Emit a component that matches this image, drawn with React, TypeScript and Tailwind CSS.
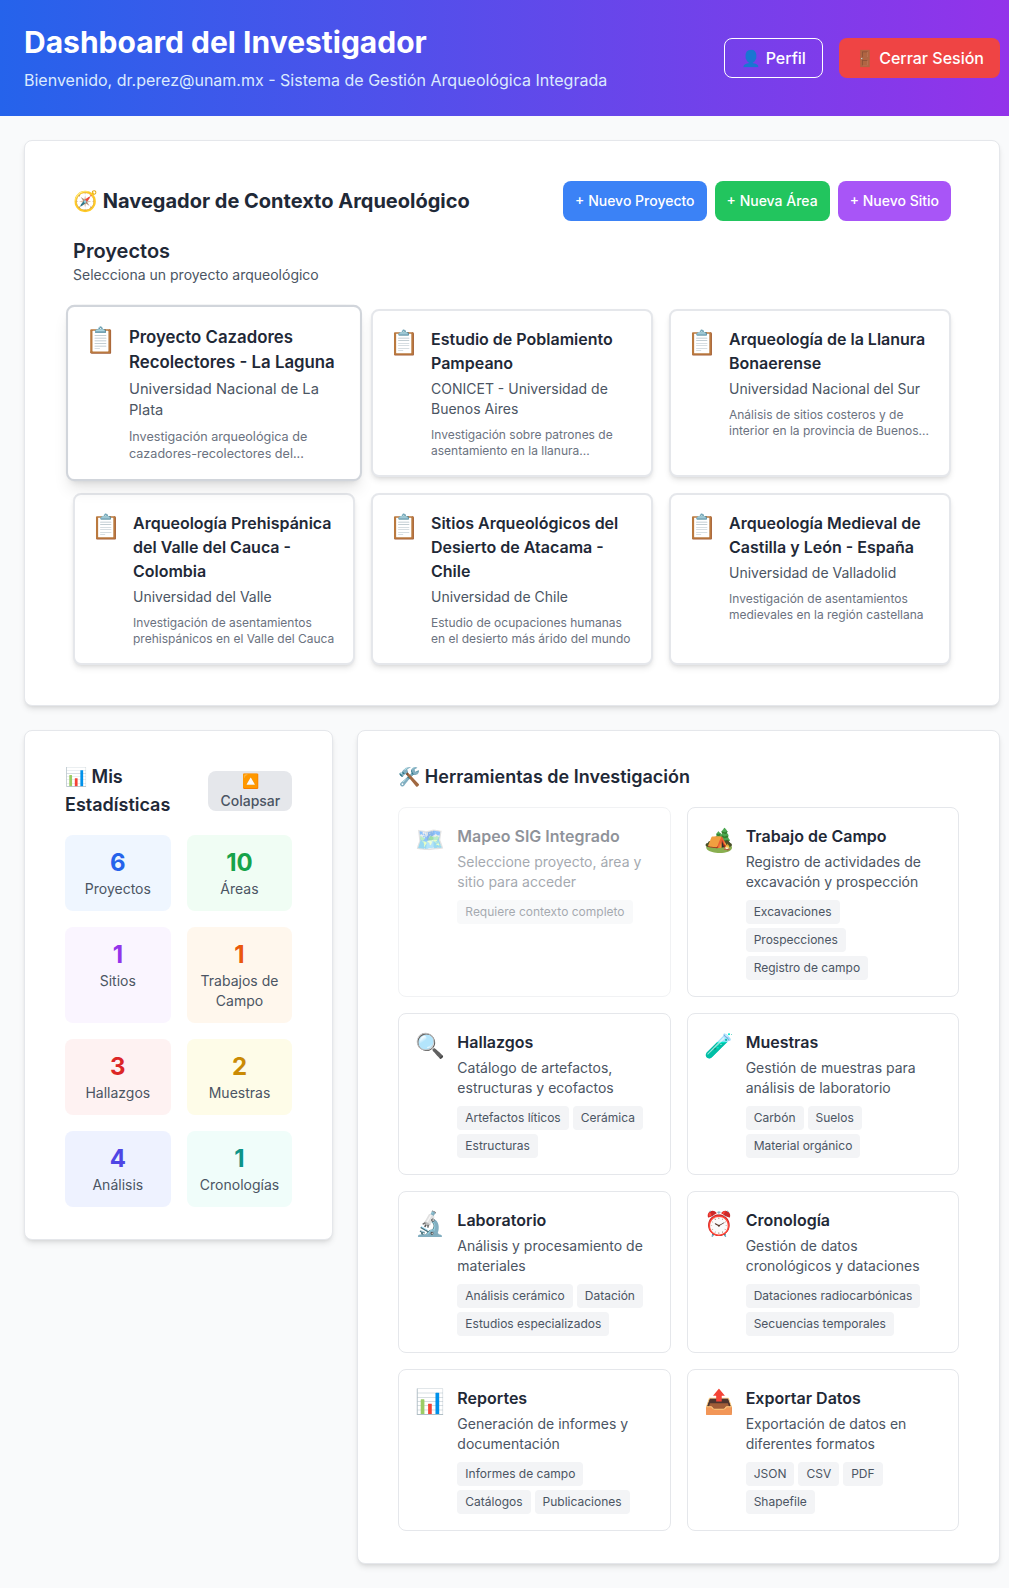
const projects = [
  {
    title: "Proyecto Cazadores Recolectores - La Laguna",
    org: "Universidad Nacional de La Plata",
    desc: "Investigación arqueológica de cazadores-recolectores del...",
    selected: true,
  },
  {
    title: "Estudio de Poblamiento Pampeano",
    org: "CONICET - Universidad de Buenos Aires",
    desc: "Investigación sobre patrones de asentamiento en la llanura...",
  },
  {
    title: "Arqueología de la Llanura Bonaerense",
    org: "Universidad Nacional del Sur",
    desc: "Análisis de sitios costeros y de interior en la provincia de Buenos...",
  },
  {
    title: "Arqueología Prehispánica del Valle del Cauca - Colombia",
    org: "Universidad del Valle",
    desc: "Investigación de asentamientos prehispánicos en el Valle del Cauca",
  },
  {
    title: "Sitios Arqueológicos del Desierto de Atacama - Chile",
    org: "Universidad de Chile",
    desc: "Estudio de ocupaciones humanas en el desierto más árido del mundo",
  },
  {
    title: "Arqueología Medieval de Castilla y León - España",
    org: "Universidad de Valladolid",
    desc: "Investigación de asentamientos medievales en la región castellana",
  },
];

const stats = [
  { value: "6", label: "Proyectos", box: "bg-[#eff6ff]", text: "text-[#2563eb]" },
  { value: "10", label: "Áreas", box: "bg-[#f0fdf4]", text: "text-[#16a34a]" },
  { value: "1", label: "Sitios", box: "bg-[#faf5ff]", text: "text-[#9333ea]" },
  { value: "1", label: "Trabajos de Campo", box: "bg-[#fff7ed]", text: "text-[#ea580c]" },
  { value: "3", label: "Hallazgos", box: "bg-[#fef2f2]", text: "text-[#dc2626]" },
  { value: "2", label: "Muestras", box: "bg-[#fefce8]", text: "text-[#ca8a04]" },
  { value: "4", label: "Análisis", box: "bg-[#eef2ff]", text: "text-[#4f46e5]" },
  { value: "1", label: "Cronologías", box: "bg-[#f0fdfa]", text: "text-[#0d9488]" },
];

const tools = [
  {
    icon: "🗺️",
    title: "Mapeo SIG Integrado",
    desc: "Seleccione proyecto, área y sitio para acceder",
    tags: ["Requiere contexto completo"],
    disabled: true,
  },
  {
    icon: "🏕️",
    title: "Trabajo de Campo",
    desc: "Registro de actividades de excavación y prospección",
    tags: ["Excavaciones", "Prospecciones", "Registro de campo"],
  },
  {
    icon: "🔍",
    title: "Hallazgos",
    desc: "Catálogo de artefactos, estructuras y ecofactos",
    tags: ["Artefactos líticos", "Cerámica", "Estructuras"],
  },
  {
    icon: "🧪",
    title: "Muestras",
    desc: "Gestión de muestras para análisis de laboratorio",
    tags: ["Carbón", "Suelos", "Material orgánico"],
  },
  {
    icon: "🔬",
    title: "Laboratorio",
    desc: "Análisis y procesamiento de materiales",
    tags: ["Análisis cerámico", "Datación", "Estudios especializados"],
  },
  {
    icon: "⏰",
    title: "Cronología",
    desc: "Gestión de datos cronológicos y dataciones",
    tags: ["Dataciones radiocarbónicas", "Secuencias temporales"],
  },
  {
    icon: "📊",
    title: "Reportes",
    desc: "Generación de informes y documentación",
    tags: ["Informes de campo", "Catálogos", "Publicaciones"],
  },
  {
    icon: "📤",
    title: "Exportar Datos",
    desc: "Exportación de datos en diferentes formatos",
    tags: ["JSON", "CSV", "PDF", "Shapefile"],
  },
];

function ProjectCard({ project }: { project: (typeof projects)[number] }) {
  return (
    <div
      className={`flex rounded-lg border-2 bg-white p-4 ${
        project.selected
          ? "scale-105 border-[#d1d5db] shadow-[0_10px_15px_-3px_rgb(0_0_0/0.1),0_4px_6px_-4px_rgb(0_0_0/0.1)]"
          : "border-[#e5e7eb] shadow-[0_4px_6px_-1px_rgb(0_0_0/0.1),0_2px_4px_-2px_rgb(0_0_0/0.1)]"
      }`}
    >
      <div className="mr-3 text-2xl">📋</div>
      <div>
        <div className="font-semibold text-[#1f2937]">{project.title}</div>
        <div className="mt-1 text-sm text-[#4b5563]">{project.org}</div>
        <div className="mt-2 text-xs text-[#6b7280]">{project.desc}</div>
      </div>
    </div>
  );
}

function ToolCard({ tool }: { tool: (typeof tools)[number] }) {
  return (
    <div
      className={`flex rounded-lg border border-[#e5e7eb] bg-white p-4 ${
        tool.disabled ? "opacity-50" : ""
      }`}
    >
      <div className="mr-3 text-2xl">{tool.icon}</div>
      <div>
        <div className="font-semibold text-[#1f2937]">{tool.title}</div>
        <div className="mt-1 text-sm text-[#4b5563]">{tool.desc}</div>
        <div className="mt-2 flex flex-wrap gap-1">
          {tool.tags.map((tag) => (
            <span key={tag} className="rounded bg-[#f3f4f6] px-2 py-1 text-xs text-[#4b5563]">
              {tag}
            </span>
          ))}
        </div>
      </div>
    </div>
  );
}

export default function App() {
  return (
    <div className="min-h-screen bg-[#f9fafb] font-['Inter',sans-serif] text-[#1f2937]">
      <header className="flex items-center justify-between bg-[linear-gradient(to_right,#2563eb,#9333ea)] pl-6 pr-[9px] py-6 text-white">
        <div>
          <h1 className="text-3xl font-bold">Dashboard del Investigador</h1>
          <p className="mt-2 text-[#dbeafe]">
            Bienvenido, dr.perez@unam.mx - Sistema de Gestión Arqueológica Integrada
          </p>
        </div>
        <div className="flex items-center gap-4">
          <button className="rounded-lg border border-white px-4 py-[7px] font-medium">👤 Perfil</button>
          <button className="rounded-lg bg-[#ef4444] px-4 py-2 font-medium">🚪 Cerrar Sesión</button>
        </div>
      </header>

      <main className="flex flex-col gap-6 pl-6 pr-[9px] py-6">
        <section className="rounded-lg border border-[#e5e7eb] bg-white px-12 py-10 shadow-[0_4px_6px_-1px_rgb(0_0_0/0.1),0_2px_4px_-2px_rgb(0_0_0/0.1)]">
          <div className="mb-4 flex items-center justify-between">
            <h2 className="text-xl font-bold">🧭 Navegador de Contexto Arqueológico</h2>
            <div className="flex gap-2">
              <button className="rounded-lg bg-[#3b82f6] px-3 py-2.5 text-sm font-medium text-white">+ Nuevo Proyecto</button>
              <button className="rounded-lg bg-[#22c55e] px-3 py-2.5 text-sm font-medium text-white">+ Nueva Área</button>
              <button className="rounded-lg bg-[#a855f7] px-3 py-2.5 text-sm font-medium text-white">+ Nuevo Sitio</button>
            </div>
          </div>
          <h3 className="text-xl font-semibold">Proyectos</h3>
          <p className="mb-6 text-sm text-[#4b5563]">Selecciona un proyecto arqueológico</p>
          <div className="grid grid-cols-3 gap-4">
            {projects.map((project) => (
              <ProjectCard key={project.title} project={project} />
            ))}
          </div>
        </section>

        <div className="grid grid-cols-3 items-start gap-6">
          <section className="rounded-lg border border-[#e5e7eb] bg-white px-10 py-8 shadow-[0_4px_6px_-1px_rgb(0_0_0/0.1),0_2px_4px_-2px_rgb(0_0_0/0.1)]">
            <div className="mb-4 flex items-center justify-between">
              <h2 className="text-lg font-semibold">📊 Mis Estadísticas</h2>
              <button className="w-[84px] shrink-0 rounded-lg bg-[#e5e7eb] px-3 text-sm font-medium text-[#4b5563]">🔼 Colapsar</button>
            </div>
            <div className="grid grid-cols-2 gap-4">
              {stats.map((stat) => (
                <div key={stat.label} className={`rounded-lg p-3 text-center ${stat.box}`}>
                  <div className={`text-2xl font-bold ${stat.text}`}>{stat.value}</div>
                  <div className="text-sm text-[#4b5563]">{stat.label}</div>
                </div>
              ))}
            </div>
          </section>

          <section className="col-span-2 rounded-lg border border-[#e5e7eb] bg-white px-10 py-8 shadow-[0_4px_6px_-1px_rgb(0_0_0/0.1),0_2px_4px_-2px_rgb(0_0_0/0.1)]">
            <h2 className="mb-4 text-lg font-semibold">🛠️ Herramientas de Investigación</h2>
            <div className="grid grid-cols-2 gap-4">
              {tools.map((tool) => (
                <ToolCard key={tool.title} tool={tool} />
              ))}
            </div>
          </section>
        </div>
      </main>
    </div>
  );
}
